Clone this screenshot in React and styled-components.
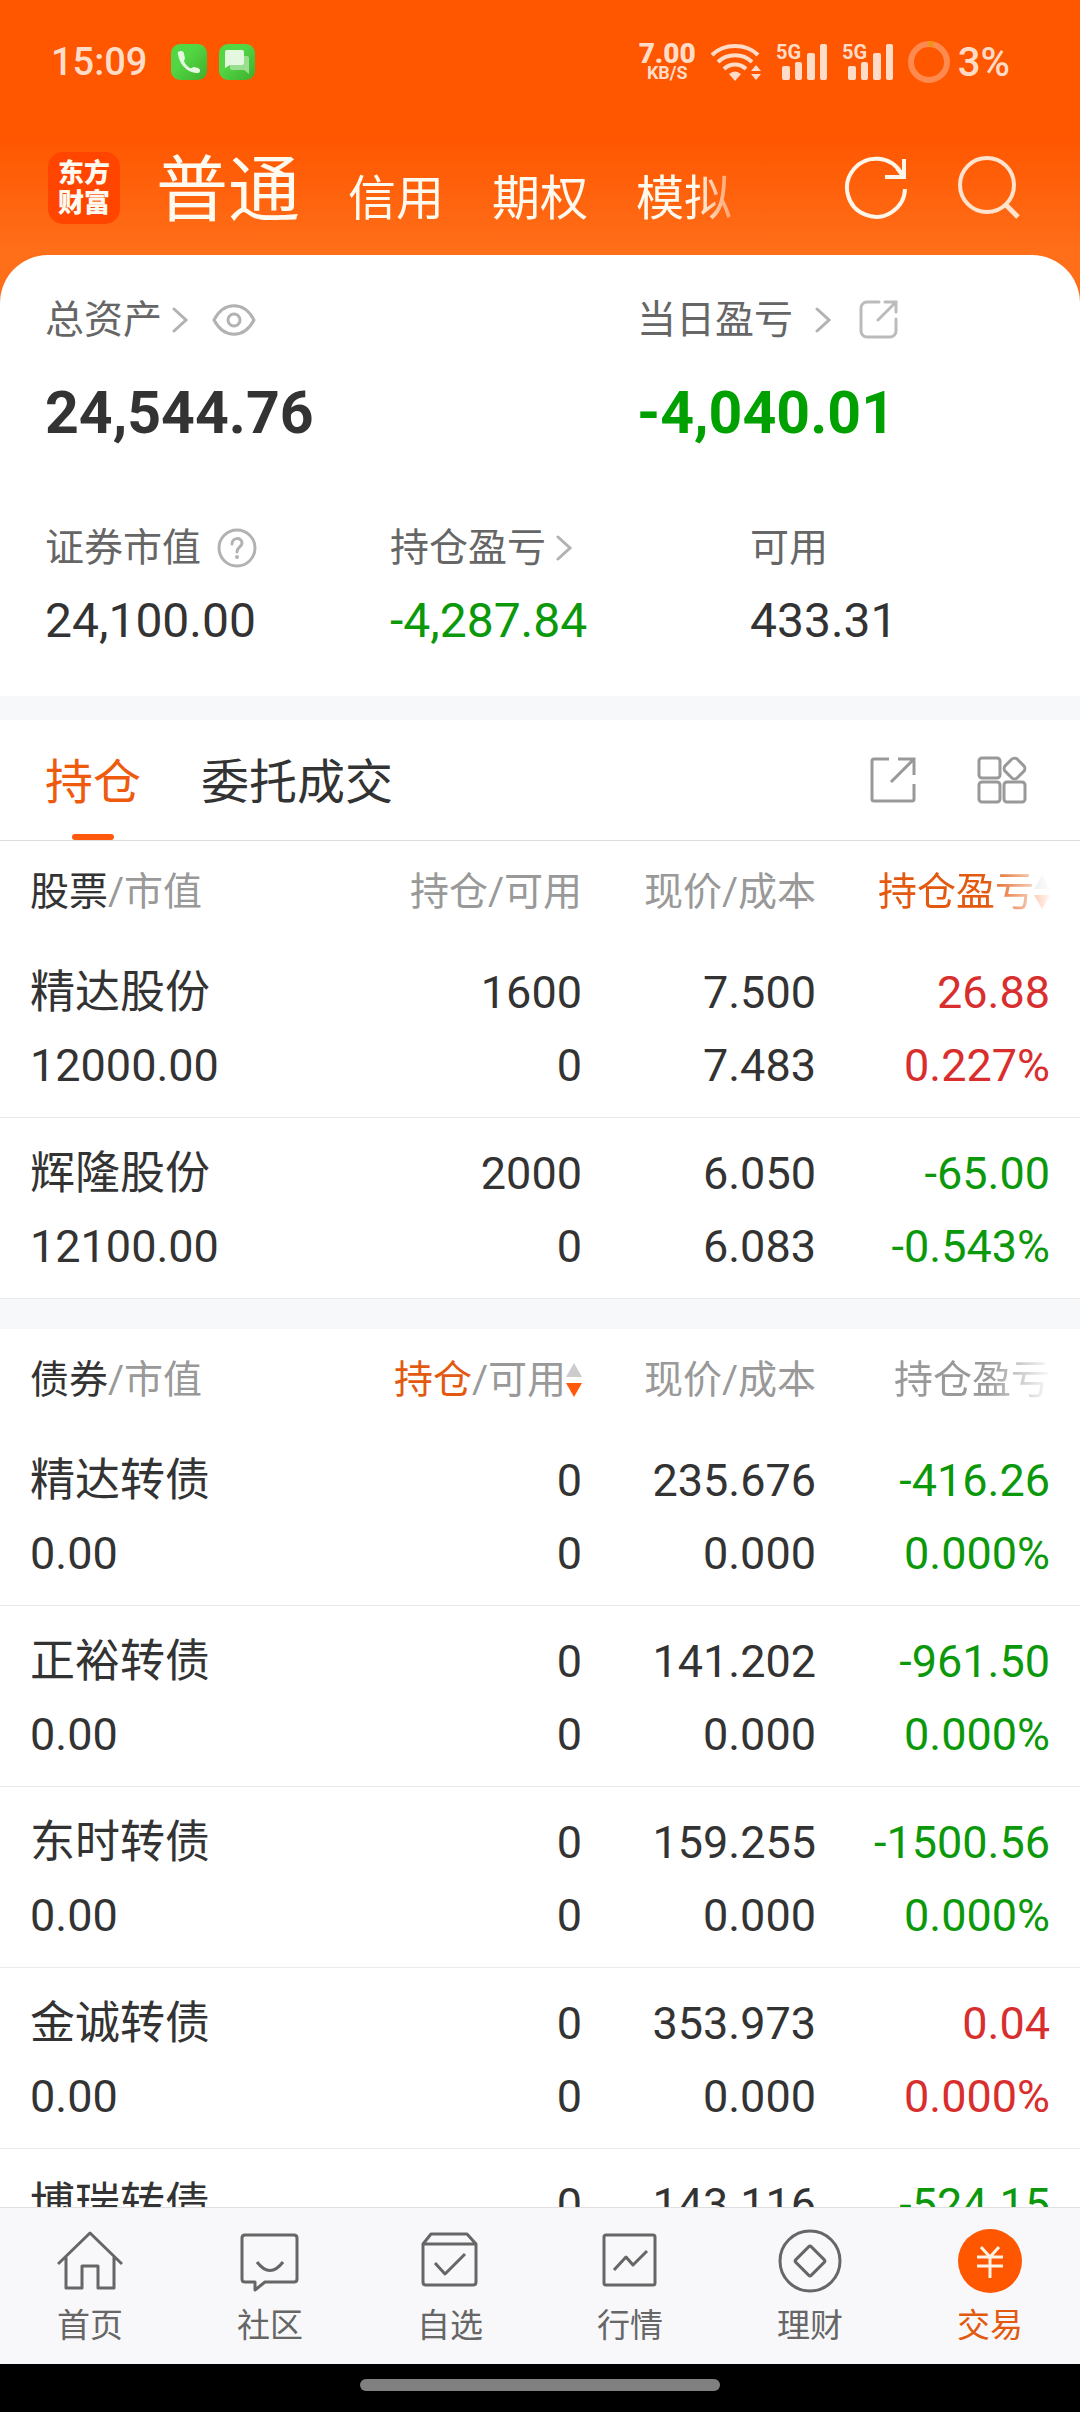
import React, { useState } from 'react';
import styled, { createGlobalStyle } from 'styled-components';

const accounts = ['普通', '信用', '期权', '模拟'];

const stocks = [
  { name: '精达股份', value: '12000.00', hold: '1600', usable: '0', price: '7.500', cost: '7.483', profit: '26.88', rate: '0.227%' },
  { name: '辉隆股份', value: '12100.00', hold: '2000', usable: '0', price: '6.050', cost: '6.083', profit: '-65.00', rate: '-0.543%' },
];

const bonds = [
  { name: '精达转债', value: '0.00', hold: '0', usable: '0', price: '235.676', cost: '0.000', profit: '-416.26', rate: '0.000%' },
  { name: '正裕转债', value: '0.00', hold: '0', usable: '0', price: '141.202', cost: '0.000', profit: '-961.50', rate: '0.000%' },
  { name: '东时转债', value: '0.00', hold: '0', usable: '0', price: '159.255', cost: '0.000', profit: '-1500.56', rate: '0.000%' },
  { name: '金诚转债', value: '0.00', hold: '0', usable: '0', price: '353.973', cost: '0.000', profit: '0.04', rate: '0.000%' },
  { name: '博瑞转债', value: '0.00', hold: '0', usable: '0', price: '143.116', cost: '0.000', profit: '-524.15', rate: '0.000%' },
];

/* ---------- icons ---------- */

const PhoneIcon = () => (
  <svg width="36" height="36" viewBox="0 0 36 36">
    <defs>
      <linearGradient id="green" x1="0" y1="0" x2="1" y2="1">
        <stop offset="0.4" stopColor="#52d644" />
        <stop offset="1" stopColor="#3fae2c" />
      </linearGradient>
    </defs>
    <rect width="36" height="36" rx="9" fill="url(#green)" />
    <path d="M7 10c-1-2 1-3 3-3 2 0 3 1 3 3l1 4c0 1-1 2-1 3 1 3 4 6 6 7 1 1 2-1 4-1l4 1c2 1 2 2 2 3 0 2-2 2-4 2C15 28 8 19 7 10z" fill="#e4f8e0" />
  </svg>
);

const ChatIcon = () => (
  <svg width="36" height="36" viewBox="0 0 36 36">
    <rect width="36" height="36" rx="9" fill="url(#green)" />
    <path d="M13 12h15q2 0 2 2v16l-5-4H13q-2 0-2-2V14q0-2 2-2z" fill="#9adf90" />
    <path d="M8 6h15q2 0 2 2v11q0 2-2 2H11l-5 3V8q0-2 2-2z" fill="#e4f8e0" />
  </svg>
);

const WifiIcon = () => (
  <svg width="52" height="38" viewBox="0 0 52 38" fill="none" stroke="#ffdcc8" strokeWidth="4">
    <path d="M2 12C14 0 36 0 48 12" />
    <path d="M8 19c9-9 25-9 34 0" />
    <path d="M14 26c6-6 16-6 22 0" />
    <path d="M19 31q6-5 12 0l-6 7z" fill="#ffdcc8" stroke="none" />
    <path d="M46 22l5 6H41zM46 37l5-6H41z" fill="#ffdcc8" stroke="none" />
  </svg>
);

const SignalIcon = () => (
  <svg width="52" height="46" viewBox="0 -4 52 46" fill="#ffdcc8">
    <text x="0" y="16" fontSize="20" fontWeight="700" fontFamily="Roboto, sans-serif">5G</text>
    <rect x="6" y="23" width="8" height="14" rx="2" />
    <rect x="19" y="19" width="7" height="18" rx="2" />
    <rect x="31" y="10" width="8" height="27" rx="2" />
    <rect x="44" y="1" width="7" height="36" rx="2" />
  </svg>
);

const BatteryIcon = () => (
  <svg width="42" height="42" viewBox="0 0 42 42" fill="none" strokeWidth="6">
    <circle cx="21" cy="21" r="18" stroke="#ff8a50" />
    <path d="M21 3q2 0 4 .4" stroke="#e89b0c" />
  </svg>
);

const RefreshIcon = () => (
  <svg width="64" height="64" viewBox="0 0 64 64" fill="none" stroke="#fff6ea" strokeWidth="4">
    <path d="M61 33A29 29 0 1 1 57 17" />
    <path d="M60 3V21H41" />
    <path d="M53 12L60 21" />
  </svg>
);

const SearchIcon = () => (
  <svg width="64" height="64" viewBox="0 0 64 64" fill="none" stroke="#ffe3cf" strokeWidth="4">
    <circle cx="31" cy="29" r="27" />
    <path d="M49 48L62 61" strokeWidth="5" />
  </svg>
);

const Chevron = () => (
  <svg width="16" height="26" viewBox="0 0 16 26" fill="none" stroke="#b2b2b2" strokeWidth="3" strokeLinecap="round">
    <path d="M2 2L14 13L2 24" />
  </svg>
);

const EyeIcon = () => (
  <svg width="44" height="32" viewBox="0 0 44 32" fill="none" stroke="#b2b2b2" strokeWidth="3">
    <path d="M2 16C12-3 32-3 42 16C32 35 12 35 2 16z" strokeLinejoin="round" />
    <circle cx="22" cy="16" r="6" />
  </svg>
);

const HelpIcon = () => (
  <svg width="40" height="40" viewBox="0 0 40 40" fill="none" stroke="#b2b2b2" strokeWidth="3">
    <circle cx="20" cy="20" r="18" />
    <path d="M15 16c0-7 10-7 10-1 0 4-5 4-5 9" strokeLinecap="round" />
    <circle cx="20" cy="29" r="1" strokeWidth="2" />
  </svg>
);

const ShareIcon = () => (
  <svg width="40" height="40" viewBox="0 0 40 40" fill="none" stroke="#bbb" strokeWidth="3" strokeLinecap="round">
    <path d="M20 2H8a6 6 0 0 0-6 6v23a6 6 0 0 0 6 6h23a6 6 0 0 0 6-6V19" />
    <path d="M26 2h11v10M19 20L37 2" />
  </svg>
);

const ExportIcon = () => (
  <svg width="48" height="48" viewBox="0 0 48 48" fill="none" stroke="#999" strokeWidth="3">
    <path d="M20 3H5q-2 0-2 2v38q0 2 2 2h38q2 0 2-2V28" />
    <path d="M29 3h16v16M22 26L45 3" />
  </svg>
);

const GridIcon = () => (
  <svg width="50" height="50" viewBox="0 0 50 50" fill="none" stroke="#999" strokeWidth="3">
    <rect x="2" y="3" width="21" height="20" rx="3" />
    <rect x="2" y="27" width="21" height="20" rx="3" />
    <rect x="27" y="27" width="21" height="20" rx="3" />
    <rect x="29" y="5" width="17" height="17" rx="4" transform="rotate(45 37.5 13.5)" />
  </svg>
);

const SortIcon = () => (
  <svg width="16" height="36" viewBox="0 0 16 36">
    <path d="M8 1L16 15H0z" fill="#ccc" />
    <path d="M8 35L0 21H16z" fill="#ff5a0c" />
  </svg>
);

const NavSvg = ({ children }) => (
  <svg width="66" height="66" viewBox="0 0 66 66" fill="none" stroke="#666" strokeWidth="3" strokeLinejoin="round">
    {children}
  </svg>
);

const navItems = [
  { label: '首页', icon: <NavSvg><path d="M1 35L33 4L65 35M9 28V59H25V37H41V59H57V28" /></NavSvg> },
  { label: '社区', icon: <NavSvg><path d="M8 6H57q3 0 3 3V50q0 3-3 3H28L18 61V53H8q-3 0-3-3V9q0-3 3-3zM20 33q13 17 26 0" /></NavSvg> },
  { label: '自选', icon: <NavSvg><path d="M6 15L14 5H50L59 15V53q0 3-3 3H9q-3 0-3-3zM6 15H59M18 34L28 45L48 25" /></NavSvg> },
  { label: '行情', icon: <NavSvg><path d="M9 6H56q2 0 2 2V54q0 2-2 2H9q-2 0-2-2V8q0-2 2-2zM17 41L29 28L36 36L50 22" /></NavSvg> },
  {
    label: '理财',
    icon: (
      <NavSvg>
        <circle cx="33" cy="32" r="30" />
        <rect x="22" y="21" width="22" height="22" rx="2" transform="rotate(45 33 32)" />
      </NavSvg>
    ),
  },
  {
    label: '交易',
    icon: (
      <NavSvg>
        <circle cx="33" cy="32" r="32" fill="#ff5600" stroke="none" />
        <path d="M24 18L33 28L42 18M33 28V49M20 28H46M20 37H46" stroke="#fff3e6" />
      </NavSvg>
    ),
  },
];

/* ---------- pieces ---------- */

function Holdings({ kind, rows, sortBy }) {
  return (
    <Table>
      <thead>
        <tr>
          <Th scope="col"><SortButton><b>{kind}</b>/市值</SortButton></Th>
          <Th scope="col" $width="234px">
            <SortButton>
              {sortBy === 'hold' ? <em>持仓</em> : '持仓'}/可用
              {sortBy === 'hold' && <SortIcon />}
            </SortButton>
          </Th>
          <Th scope="col" $width="234px"><SortButton>现价/成本</SortButton></Th>
          <Th scope="col" $width="264px">
            <SortButton $fade>
              {sortBy === 'profit' ? <em>持仓盈亏</em> : '持仓盈亏'}
              {sortBy === 'profit' && <SortIcon />}
            </SortButton>
          </Th>
        </tr>
      </thead>
      <tbody>
        {rows.map((row) => (
          <tr key={row.name}>
            <Td><Line>{row.name}</Line><Line>{row.value}</Line></Td>
            <Td><Line>{row.hold}</Line><Line>{row.usable}</Line></Td>
            <Td><Line>{row.price}</Line><Line>{row.cost}</Line></Td>
            <Td $color={row.profit.startsWith('-') ? '#0b980b' : '#d92e2e'}>
              <Line>{row.profit}</Line><Line>{row.rate}</Line>
            </Td>
          </tr>
        ))}
      </tbody>
    </Table>
  );
}

function App() {
  const [account, setAccount] = useState('普通');
  const [tab, setTab] = useState('持仓');
  const [page, setPage] = useState('交易');

  return (
    <Screen>
      <GlobalStyle />
      <Scroller>
        <Top>
          <StatusBar>
            <Clock>15:09</Clock>
            <PhoneIcon />
            <ChatIcon />
            <StatusRight>
              <Speed><strong>7.00</strong><span>KB/S</span></Speed>
              <WifiIcon />
              <SignalIcon />
              <SignalIcon />
              <Battery><BatteryIcon />3%</Battery>
            </StatusRight>
          </StatusBar>

          <Header>
            <Logo>东方<br />财富</Logo>
            <Accounts>
              {accounts.map((name) => (
                <AccountButton key={name} $active={name === account} onClick={() => setAccount(name)}>
                  {name}
                </AccountButton>
              ))}
            </Accounts>
            <HeaderTools>
              <IconButton aria-label="刷新"><RefreshIcon /></IconButton>
              <IconButton aria-label="搜索"><SearchIcon /></IconButton>
            </HeaderTools>
          </Header>

          <Summary>
            <TotalRow>
              <div>
                <Label><LabelButton $gap="10px">总资产<Chevron /></LabelButton><IconButton aria-label="隐藏金额"><EyeIcon /></IconButton></Label>
                <Total>24,544.76</Total>
              </div>
              <div>
                <Label $gap="28px"><LabelButton $gap="22px">当日盈亏<Chevron /></LabelButton><IconButton aria-label="分享"><ShareIcon /></IconButton></Label>
                <Total $color="#00a000">-4,040.01</Total>
              </div>
            </TotalRow>
            <DetailRow>
              <div>
                <Label $gap="16px">证券市值<IconButton aria-label="说明"><HelpIcon /></IconButton></Label>
                <Amount>24,100.00</Amount>
              </div>
              <div>
                <Label><LabelButton $gap="10px">持仓盈亏<Chevron /></LabelButton></Label>
                <Amount $color="#0b980b">-4,287.84</Amount>
              </div>
              <div>
                <Label>可用</Label>
                <Amount>433.31</Amount>
              </div>
            </DetailRow>
          </Summary>
        </Top>

        <Band $height="24px" />

        <Tabs>
          {['持仓', '委托成交'].map((name) => (
            <Tab key={name} $active={name === tab} onClick={() => setTab(name)}>{name}</Tab>
          ))}
          <TabTools>
            <IconButton aria-label="导出"><ExportIcon /></IconButton>
            <IconButton aria-label="更多"><GridIcon /></IconButton>
          </TabTools>
        </Tabs>

        <Holdings kind="股票" rows={stocks} sortBy="profit" />
        <Band $height="30px" />
        <Holdings kind="债券" rows={bonds} sortBy="hold" />
      </Scroller>

      <BottomNav>
        {navItems.map((item) => (
          <NavLink
            key={item.label}
            href="#"
            $active={item.label === page}
            onClick={() => setPage(item.label)}
          >
            {item.icon}
            {item.label}
          </NavLink>
        ))}
      </BottomNav>
      <GestureArea><GestureBar /></GestureArea>
    </Screen>
  );
}

/* ---------- styles ---------- */

const GlobalStyle = createGlobalStyle`
  * {
    box-sizing: border-box;
  }
  body {
    margin: 0;
    background: #fff;
    color: #333;
    font-family: Roboto, "Noto Sans CJK SC", sans-serif;
  }
  button {
    margin: 0;
    padding: 0;
    border: 0;
    background: none;
    color: inherit;
    font: inherit;
    cursor: pointer;
  }
  svg {
    display: block;
    flex-shrink: 0;
  }
`;

const Screen = styled.div`
  display: flex;
  flex-direction: column;
  height: 100vh;
`;

const Scroller = styled.main`
  flex: 1;
  min-height: 0;
  overflow-y: auto;
  scrollbar-width: none;
`;

const Top = styled.div`
  background: linear-gradient(#ff5600 135px, #ff6f1a 255px);
`;

const StatusBar = styled.div`
  display: flex;
  align-items: center;
  gap: 12px;
  height: 124px;
  padding: 0 70px 0 51px;
  color: #ffdcc8;
`;

const Clock = styled.span`
  margin-right: 12px;
  font-size: 38px;
  font-weight: 500;
`;

const StatusRight = styled.div`
  display: flex;
  align-items: center;
  gap: 14px;
  margin-left: auto;
`;

const Speed = styled.div`
  display: flex;
  flex-direction: column;
  align-items: center;
  font-weight: 700;
  strong {
    font-size: 28px;
    line-height: 22px;
  }
  span {
    font-size: 18px;
    line-height: 16px;
  }
`;

const Battery = styled.div`
  display: flex;
  align-items: center;
  gap: 8px;
  font-size: 40px;
  font-weight: 500;
`;

const Header = styled.header`
  display: flex;
  align-items: center;
  height: 131px;
  padding: 0 60px 4px 48px;
  color: #fffaf0;
`;

const Logo = styled.div`
  display: flex;
  align-items: center;
  justify-content: center;
  width: 72px;
  height: 72px;
  margin-right: 36px;
  border-radius: 15px;
  background: #ff4500;
  font-size: 26px;
  font-weight: 900;
  line-height: 30px;
`;

const Accounts = styled.nav`
  display: flex;
  align-items: baseline;
  gap: 48px;
  padding-top: 14px;
  mask-image: linear-gradient(to right, #000 calc(100% - 38px), rgba(0, 0, 0, 0.4));
`;

const AccountButton = styled.button`
  font-size: ${(props) => (props.$active ? '72px' : '48px')};
  line-height: 96px;
  white-space: nowrap;
`;

const HeaderTools = styled.div`
  display: flex;
  gap: 48px;
  margin-left: auto;
`;

const IconButton = styled.button`
  display: flex;
`;

const Summary = styled.section`
  padding: 40px 45px 47px;
  border-radius: 48px 48px 0 0;
  background: #fff;
`;

const TotalRow = styled.div`
  display: grid;
  grid-template-columns: 1fr 398px;
`;

const DetailRow = styled.div`
  display: grid;
  grid-template-columns: 1fr 360px 285px;
  margin-top: 74px;
`;

const Label = styled.div`
  display: flex;
  align-items: center;
  gap: ${(props) => props.$gap || '24px'};
  height: 50px;
  color: #666;
  font-size: 39px;
  line-height: 50px;
`;

const LabelButton = styled.button`
  display: flex;
  align-items: center;
  gap: ${(props) => props.$gap};
`;

const Total = styled.div`
  margin-top: 32px;
  color: ${(props) => props.$color || '#333'};
  font-size: 59px;
  font-weight: 700;
  line-height: 72px;
`;

const Amount = styled.div`
  margin-top: 20px;
  color: ${(props) => props.$color || '#333'};
  font-size: 48px;
  line-height: 56px;
`;

const Band = styled.div`
  height: ${(props) => props.$height};
  background: #f7f8fa;
`;

const Tabs = styled.div`
  display: flex;
  align-items: center;
  gap: 60px;
  padding: 0 53px 0 45px;
  border-bottom: 1px solid #ddd;
`;

const Tab = styled.button`
  display: flex;
  flex-direction: column;
  align-items: center;
  height: 120px;
  padding-top: 35px;
  color: ${(props) => (props.$active ? '#ee5a0e' : '#333')};
  font-size: 48px;
  line-height: 56px;

  &::after {
    content: '';
    width: 42px;
    height: 6px;
    margin-top: auto;
    border-radius: 3px;
    background: ${(props) => (props.$active ? '#ff5a0c' : 'transparent')};
  }
`;

const TabTools = styled.div`
  display: flex;
  align-items: center;
  gap: 60px;
  margin-left: auto;
`;

const Table = styled.table`
  width: 100%;
  table-layout: fixed;
  border-spacing: 0;
`;

const Th = styled.th`
  width: ${(props) => props.$width || 'auto'};
  padding: 26px 0 20px;
  color: #999;
  font-size: 39px;
  font-weight: 400;
  line-height: 50px;
  text-align: right;
  white-space: nowrap;

  &:first-child {
    padding-left: 30px;
    text-align: left;
  }
  &:last-child {
    padding-right: 30px;
  }
`;

const SortButton = styled.button`
  display: inline-flex;
  align-items: center;
  vertical-align: top;
  mask-image: ${(props) => (props.$fade ? 'linear-gradient(to right, #000 calc(100% - 64px), rgba(0, 0, 0, 0.05))' : 'none')};

  b {
    color: #333;
    font-weight: 400;
  }
  em {
    color: #e2590f;
    font-style: normal;
  }
`;

const Td = styled.td`
  padding: 19px 0 15px;
  border-bottom: 1px solid #ebebeb;
  color: ${(props) => props.$color || '#333'};
  font-size: 45px;
  line-height: 73px;
  text-align: right;
  white-space: nowrap;

  &:first-child {
    padding-left: 30px;
    text-align: left;
  }
  &:last-child {
    padding-right: 30px;
  }
`;

const Line = styled.div``;

const BottomNav = styled.nav`
  display: grid;
  grid-template-columns: repeat(6, 1fr);
  border-top: 1px solid #e0e0e0;
  background: #f8f8fa;
`;

const NavLink = styled.a`
  display: flex;
  flex-direction: column;
  align-items: center;
  gap: 11px;
  padding: 21px 0 18px;
  color: ${(props) => (props.$active ? '#e2590f' : '#666')};
  font-size: 33px;
  line-height: 40px;
  text-decoration: none;
`;

const GestureArea = styled.div`
  display: flex;
  align-items: center;
  justify-content: center;
  height: 48px;
  padding-bottom: 6px;
  background: #000;
`;

const GestureBar = styled.div`
  width: 33.333%;
  height: 12px;
  border-radius: 6px;
  background: #808080;
`;

export default App;
